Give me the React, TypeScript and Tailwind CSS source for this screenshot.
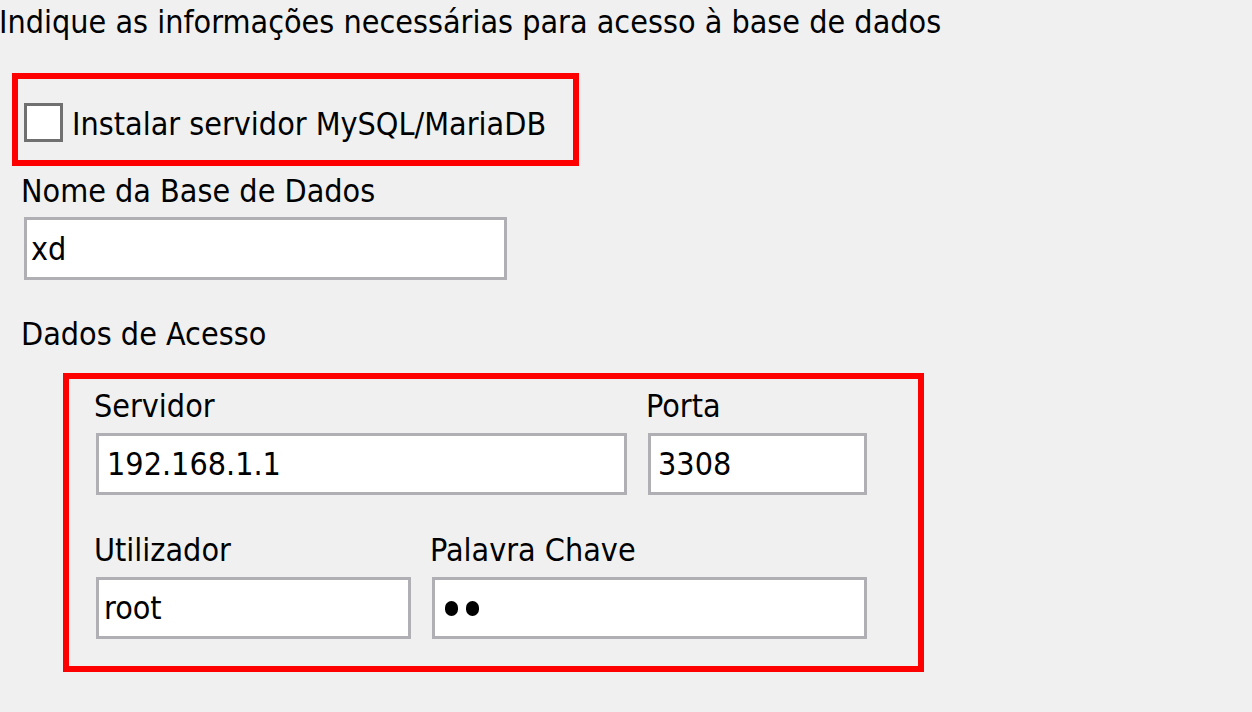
import React from "react";

function Field({
  label,
  width,
  children,
  textPad,
}: {
  label: string;
  width: number;
  children: React.ReactNode;
  textPad: string;
}) {
  return (
    <div className="flex flex-col" style={{ width }}>
      <div className="h-[38px] leading-[38px] -ml-[2px] whitespace-nowrap">{label}</div>
      <div
        className={`mt-[8px] h-[62px] bg-white border-[3px] border-[#b0b0b4] flex items-center ${textPad}`}
      >
        {children}
      </div>
    </div>
  );
}

export default function App() {
  return (
    <div className="w-[1252px] h-[712px] bg-[#f0f0f0] overflow-hidden text-black text-[32px] font-['DejaVu_Sans_Condensed','Liberation_Sans',sans-serif]">
      <div className="pt-[3px] h-[41px] leading-[38px] -ml-[1px] whitespace-nowrap">
        Indique as informações necessárias para acesso à base de dados
      </div>

      <div className="mt-[32px] ml-[12px] w-[567px] h-[93px] border-[6px] border-[#ff0000] flex items-start pl-[6px]">
        <div className="mt-[24px] w-[39px] h-[39px] bg-white border-[3px] border-[#707070] shrink-0" />
        <div className="mt-[26px] ml-[9px] h-[38px] leading-[38px] whitespace-nowrap">
          Instalar servidor MySQL/MariaDB
        </div>
      </div>

      <div className="mt-[6px] ml-[21px] h-[38px] leading-[38px] whitespace-nowrap">Nome da Base de Dados</div>
      <div className="mt-[7px] ml-[24px] w-[483px] h-[63px] bg-white border-[3px] border-[#b0b0b4] flex items-center pl-[4px]">
        xd
      </div>

      <div className="mt-[35px] ml-[21px] h-[38px] leading-[38px] whitespace-nowrap">Dados de Acesso</div>

      <div className="mt-[20px] ml-[63px] w-[861px] h-[299px] border-[6px] border-[#ff0000] pl-[27px] pt-[8px] flex flex-col">
        <div className="flex gap-[21px]">
          <Field label="Servidor" width={531} textPad="pl-[8px]">
            192.168.1.1
          </Field>
          <Field label="Porta" width={219} textPad="pl-[7px]">
            3308
          </Field>
        </div>
        <div className="mt-[36px] flex gap-[21px]">
          <Field label="Utilizador" width={315} textPad="pl-[5px]">
            root
          </Field>
          <Field label="Palavra Chave" width={435} textPad="pl-[10px]">
            <div className="flex gap-[8px]">
              <div className="w-[13px] h-[15px] rounded-full bg-black" />
              <div className="w-[13px] h-[15px] rounded-full bg-black" />
            </div>
          </Field>
        </div>
      </div>
    </div>
  );
}
